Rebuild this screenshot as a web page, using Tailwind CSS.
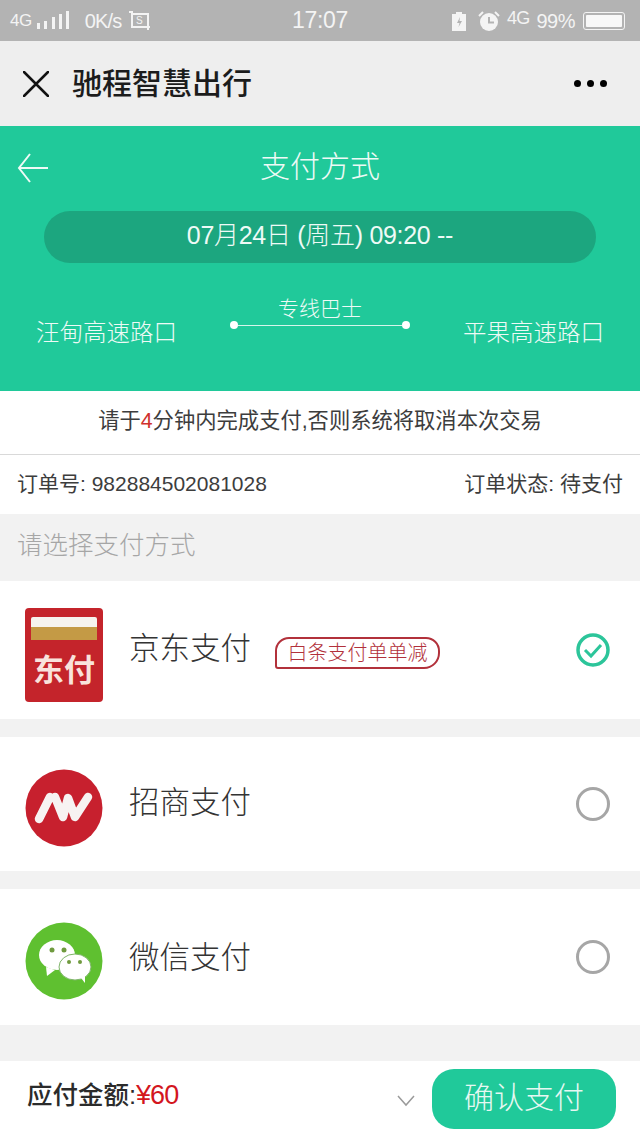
<!DOCTYPE html>
<html lang="zh-CN">
<head>
  <meta charset="UTF-8">
  <meta name="viewport" content="width=device-width, initial-scale=1.0">
  <title>支付方式</title>
  <script src="https://cdn.jsdelivr.net/npm/@tailwindcss/browser@4"></script>
</head>
<body class="font-['Liberation_Sans','Noto_Sans_CJK_SC',sans-serif] bg-[#f2f2f2] w-[640px] h-[1138px] overflow-hidden flex flex-col">

  <!-- Status bar -->
  <div class="h-[41px] bg-[#b3b3b3] text-[#f4f4f4] flex items-center pl-[10px] pr-[15px] relative shrink-0">
    <span class="text-[17px] tracking-[-0.5px]">4G</span>
    <svg class="ml-[5px] mb-[2px]" width="33" height="20" viewBox="0 0 33 20" fill="#f4f4f4">
      <rect x="0" y="13" width="3" height="6"/><rect x="7" y="11" width="3" height="8"/><rect x="15" y="7" width="3" height="12"/><rect x="22" y="4" width="3" height="15"/><rect x="29" y="1" width="3" height="18"/>
    </svg>
    <span class="ml-[15px] text-[20px] tracking-[-0.8px]">0K/s</span>
    <svg class="ml-[6px]" width="24" height="22" viewBox="0 0 24 22" fill="none" stroke="#f4f4f4" stroke-width="2">
      <path d="M1 2h3v15h18M4 4h16v16"/>
      <text x="8" y="14" font-size="10" fill="#f4f4f4" stroke="none" font-family="Liberation Sans">S</text>
    </svg>
    <span class="absolute left-0 right-0 text-center text-[23px] tracking-[-0.3px]">17:07</span>
    <div class="ml-auto flex items-center">
      <svg width="16" height="20" viewBox="0 0 16 20"><path d="M1 3h4V1h6v2h4v17H1z" fill="#f4f4f4"/><path d="M9 6l-3 6h2.500l-1 4 3.500-6H8.500z" fill="#b3b3b3"/></svg>
      <svg class="ml-[11px]" width="22" height="22" viewBox="0 0 22 22"><circle cx="11" cy="12" r="9" fill="#f4f4f4"/><path d="M11 7v5.500h5" fill="none" stroke="#b3b3b3" stroke-width="2"/><path d="M1 6l4-4M21 6l-4-4" stroke="#f4f4f4" stroke-width="2"/></svg>
      <span class="ml-[7px] text-[18px] tracking-[-0.8px] mb-[5px]">4G</span>
      <span class="ml-[7px] text-[20px] tracking-[-0.5px]">99%</span>
      <div class="ml-[8px] w-[42px] h-[18px] border border-[#f4f4f4] rounded-[3px] p-[2px] relative">
        <div class="w-full h-full bg-[#f8f8f8] rounded-[1px]"></div>
      </div>
    </div>
  </div>

  <!-- Title bar -->
  <div class="h-[85px] bg-[#eeeeee] flex items-center pl-[23px] pr-[33px] shrink-0">
    <svg width="26" height="26" viewBox="0 0 26 26" stroke="#111" stroke-width="2.500" stroke-linecap="round"><path d="M1 1l24 24M25 1L1 25"/></svg>
    <span class="ml-[23px] text-[30px] font-medium text-[#1c1c1c] leading-none">驰程智慧出行</span>
    <div class="ml-auto flex gap-[6px]">
      <div class="w-[7px] h-[7px] rounded-full bg-black"></div>
      <div class="w-[7px] h-[7px] rounded-full bg-black"></div>
      <div class="w-[7px] h-[7px] rounded-full bg-black"></div>
    </div>
  </div>

  <!-- Trip header -->
  <div class="h-[265px] bg-[#20c99a] text-[#eefaf6] shrink-0 flex flex-col">
    <div class="h-[85px] flex items-center justify-center relative">
      <svg class="absolute left-[17px] top-[27px]" width="31" height="30" viewBox="0 0 31 30" fill="none" stroke="#eefaf6" stroke-width="2"><path d="M13 1L2 15l11 14M2 15h29"/></svg>
      <span class="text-[30px] font-light leading-none mb-[3px]">支付方式</span>
    </div>
    <div class="mx-[44px] h-[52px] rounded-full bg-[#1ca67f] flex items-center justify-center text-[25px] font-light tracking-[-0.3px] pb-[3px]">07月24日 (周五) 09:20 --</div>
    <div class="flex justify-between items-start pl-[36px] pr-[36px] mt-[28px]">
      <span class="text-[23.5px] font-light mt-[26px] leading-[32px]">汪甸高速路口</span>
      <div class="w-[180px] flex flex-col items-center">
        <span class="text-[21px] font-light leading-[28px] mt-[4px]">专线巴士</span>
        <div class="w-full flex items-center mt-[-2px]">
          <div class="w-[8px] h-[8px] rounded-full bg-white"></div>
          <div class="flex-1 h-[1px] bg-[#d5f5ea]"></div>
          <div class="w-[8px] h-[8px] rounded-full bg-white"></div>
        </div>
      </div>
      <span class="text-[23.5px] font-light mt-[26px] leading-[32px]">平果高速路口</span>
    </div>
  </div>

  <!-- Countdown notice -->
  <div class="h-[64px] bg-white border-b border-[#d9d9d9] flex items-center justify-center text-[21.3px] text-[#3d3d3d] shrink-0 pb-[2px]">
    <span>请于<span class="text-[#d0312d]">4</span>分钟内完成支付,否则系统将取消本次交易</span>
  </div>

  <!-- Order info -->
  <div class="h-[59px] bg-white flex items-center justify-between pl-[17px] pr-[17px] text-[21px] text-[#3d3d3d] shrink-0 pb-[2px]">
    <span>订单号: 982884502081028</span>
    <span>订单状态: 待支付</span>
  </div>

  <div class="h-[67px] flex items-center pl-[17px] text-[25.5px] font-light text-[#a6a6a6] shrink-0 pb-[4px]">请选择支付方式</div>

  <!-- Payment options -->
  <div class="h-[138px] bg-white flex items-center pl-[25px] pr-[30px] shrink-0">
    <div class="w-[78px] h-[94px] mt-[10px] rounded-[4px] bg-[#c4242b] flex flex-col items-center pt-[9px]">
      <div class="w-[66px] h-[10px] bg-[#f6f3ee] rounded-t-[2px]"></div>
      <div class="w-[66px] h-[13px] bg-[#c49a45]"></div>
      <span class="text-[31px] font-bold text-[#f9e3dc] leading-none mt-[15px]">东付</span>
    </div>
    <span class="ml-[26px] text-[30.5px] font-light text-[#333] leading-none mb-[3px]">京东支付</span>
    <div class="ml-[24px] mt-[6px] w-[165px] h-[32px] border-2 border-[#b2313b] rounded-t-[14px] rounded-br-[16px] rounded-bl-[3px] flex items-center justify-center text-[20px] font-light text-[#b2313b] leading-none">白条支付单单减</div>
    <svg class="ml-auto" width="34" height="34" viewBox="0 0 34 34" fill="none" stroke="#2cc59a" stroke-width="3.500"><circle cx="17" cy="17" r="15"/><path d="M9 17l6 6 10-11" stroke-width="3"/></svg>
  </div>

  <div class="h-[134px] mt-[18px] bg-white flex items-center pl-[25px] pr-[30px] shrink-0">
    <svg class="mt-[8px]" width="78" height="78" viewBox="0 0 78 78">
      <circle cx="39" cy="39" r="38.500" fill="#c7202e"/>
      <path d="M14 50L25 28M30 28L38 48 43 29 50 48 63 28" fill="none" stroke="#f7f2f2" stroke-width="8.500" stroke-linecap="round" stroke-linejoin="round"/>
    </svg>
    <span class="ml-[26px] text-[30.5px] font-light text-[#333] leading-none mb-[4px]">招商支付</span>
    <div class="ml-auto w-[34px] h-[34px] rounded-full border-[3px] border-[#a6a6a6]"></div>
  </div>

  <div class="h-[136px] mt-[18px] bg-white flex items-center pl-[25px] pr-[30px] shrink-0">
    <svg class="mt-[8px]" width="78" height="78" viewBox="0 0 78 78">
      <circle cx="39" cy="39" r="38.500" fill="#5fc030"/>
      <ellipse cx="32" cy="33" rx="18" ry="15" fill="#fff"/>
      <path d="M21 45l1 9 8-6z" fill="#fff"/>
      <ellipse cx="50" cy="45" rx="16" ry="13" fill="#fff" stroke="#7fb56a" stroke-width="1"/>
      <path d="M56 56l4 5 0-8z" fill="#fff"/>
      <circle cx="27" cy="28" r="2.500" fill="#6f9a3e"/><circle cx="39" cy="28" r="2.500" fill="#6f9a3e"/>
      <circle cx="44" cy="40" r="2" fill="#6f9a3e"/><circle cx="55" cy="40" r="2" fill="#6f9a3e"/>
    </svg>
    <span class="ml-[26px] text-[30.5px] font-light text-[#333] leading-none">微信支付</span>
    <div class="ml-auto w-[34px] h-[34px] rounded-full border-[3px] border-[#a6a6a6]"></div>
  </div>

  <!-- Bottom bar -->
  <div class="h-[77px] mt-[36px] bg-white flex items-center pl-[27px] pr-[24px] shrink-0">
    <span class="text-[25.5px] font-medium text-[#2b2b2b] mb-[9px]">应付金额:<span class="text-[#d3161e] text-[27px] font-medium tracking-[-1px]">¥60</span></span>
    <svg class="ml-auto mt-[2px]" width="18" height="12" viewBox="0 0 18 12" fill="none" stroke="#9a9a9a" stroke-width="1.500"><path d="M1 1l8 9 8-9"/></svg>
    <div class="ml-[17px] w-[184px] h-[60px] rounded-[22px] bg-[#20c99a] text-[#e6f8f2] text-[30px] font-light flex items-center justify-center mb-[1px] pb-[3px]">确认支付</div>
  </div>

</body>
</html>
